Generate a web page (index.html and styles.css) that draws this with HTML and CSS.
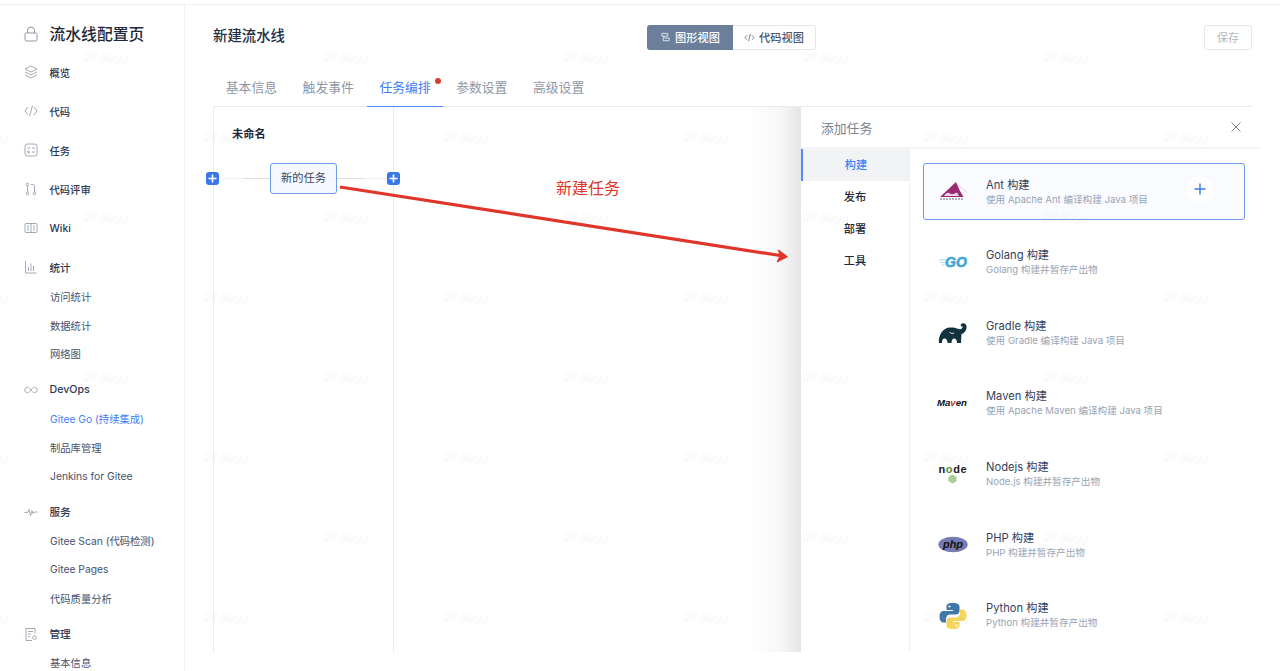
FILE: index.html
```html
<!DOCTYPE html>
<html lang="zh-CN">
<head>
  <meta charset="UTF-8" />
  <meta name="viewport" content="width=device-width, initial-scale=1.0"/>
  <title>新建流水线</title>
  <link rel="stylesheet" href="styles.css">
</head>
<body>

  <div class="top-strip"></div>

  <div class="layout">

    <!-- Sidebar -->
    <div class="sidebar">
      <div class="side-title">
        <svg class="side-icon lock" viewBox="0 0 14 16"><path d="M3.5 7V4.5a3.5 3.5 0 0 1 7 0V7"/><rect x="1" y="7" width="12" height="8" rx="1.5"/></svg>
        <span>流水线配置页</span>
      </div>
      <nav>
        <a class="menu-item">
          <svg class="side-icon" viewBox="0 0 14 14"><path d="M7 1l6 3-6 3-6-3zM1 7l6 3 6-3M1 10l6 3 6-3"/></svg>概览
        </a>
        <a class="menu-item">
          <svg class="side-icon" viewBox="0 0 14 14"><path d="M4 3L1 7l3 4M10 3l3 4-3 4M8.5 1.5l-3 11"/></svg>代码
        </a>
        <a class="menu-item">
          <svg class="side-icon" viewBox="0 0 14 14"><rect x="1" y="1" width="12" height="12" rx="2.5"/><path d="M3.5 5l1 1 1.500-2M8 5h3M8 9h3"/><circle cx="4.600" cy="9" r="1"/></svg>任务
        </a>
        <a class="menu-item">
          <svg class="side-icon" viewBox="0 0 14 14"><circle cx="3.500" cy="2.500" r="1.300"/><circle cx="3.500" cy="11.500" r="1.300"/><circle cx="10.500" cy="11.500" r="1.300"/><path d="M3.500 4v6M10.500 10V4c0-1-.5-1.500-1.500-1.500H7"/></svg>代码评审
        </a>
        <a class="menu-item">
          <svg class="side-icon" viewBox="0 0 14 14"><rect x="1" y="2.500" width="12" height="9" rx="1"/><path d="M7 2.500v9M3 5h2M3 7h2M3 9h2M9 5h2M9 7h2M9 9h2"/></svg>Wiki
        </a>

        <div class="menu-group">
          <div class="group-head">
            <svg class="side-icon" viewBox="0 0 14 14"><path d="M1.500 1v12h11M4.500 11V7M7 11V3.500M9.500 11V6"/></svg>统计
          </div>
          <a class="sub-item">访问统计</a>
          <a class="sub-item">数据统计</a>
          <a class="sub-item">网络图</a>
        </div>

        <div class="menu-group">
          <div class="group-head latin">
            <svg class="side-icon" viewBox="0 0 16 14"><path d="M8 7C6.500 4.800 5.500 4 3.800 4a3 3 0 0 0 0 6C5.500 10 6.500 9.200 8 7c1.500-2.200 2.500-3 4.200-3a3 3 0 0 1 0 6C10.500 10 9.500 9.200 8 7z"/></svg>DevOps
          </div>
          <a class="sub-item active">Gitee Go (持续集成)</a>
          <a class="sub-item">制品库管理</a>
          <a class="sub-item">Jenkins for Gitee</a>
        </div>

        <div class="menu-group">
          <div class="group-head">
            <svg class="side-icon" viewBox="0 0 14 14"><path d="M.5 7.500h3l1.500-3 1.500 6 1.500-5 1 3 1-1.500h3.500"/></svg>服务
          </div>
          <a class="sub-item">Gitee Scan (代码检测)</a>
          <a class="sub-item">Gitee Pages</a>
          <a class="sub-item">代码质量分析</a>
        </div>

        <div class="menu-group">
          <div class="group-head">
            <svg class="side-icon" viewBox="0 0 14 14"><path d="M11 6.500V1.500H2v12h6"/><path d="M4 4.500h5M4 7h3M4 9.500h2"/><circle cx="10.500" cy="10.500" r="1.800"/></svg>管理
          </div>
          <a class="sub-item">基本信息</a>
        </div>
      </nav>
    </div>

    <!-- Main Panel -->
    <div class="main-panel">
      <div class="head-row">
        <h1>新建流水线</h1>
        <div class="view-toggle">
          <a class="view-btn selected">
            <svg class="view-icon" viewBox="0 0 12 12"><path d="M2 1.500h6.500v3H2zM4 4.500v2h6v3H3.500v-3"/></svg>图形视图
          </a>
          <a class="view-btn">
            <svg class="view-icon" viewBox="0 0 12 12"><path d="M3.500 3.500L1 6l2.500 2.500M8.500 3.500L11 6 8.500 8.500M7 2L5 10"/></svg>代码视图
          </a>
        </div>
        <button class="save-btn">保存</button>
      </div>

      <div class="tabs">
        <a class="tab">基本信息</a>
        <a class="tab">触发事件</a>
        <a class="tab active">任务编排<i class="dot"></i></a>
        <a class="tab">参数设置</a>
        <a class="tab">高级设置</a>
      </div>

      <div class="stage">
        <div class="stage-col">
          <div class="col-title">未命名</div>
          <div class="node-row">
            <span class="add-btn left"><svg viewBox="0 0 13 13"><path d="M6.500 2.500v8M2.500 6.500h8"/></svg></span>
            <div class="task-node">新的任务</div>
            <span class="add-btn right"><svg viewBox="0 0 13 13"><path d="M6.500 2.500v8M2.500 6.500h8"/></svg></span>
          </div>
        </div>

        <!-- Add task drawer -->
        <div class="drawer">
          <div class="drawer-head">
            <span>添加任务</span>
            <svg class="close-icon" viewBox="0 0 10 10"><path d="M.5.500l9 9M9.500.500l-9 9"/></svg>
          </div>
          <div class="drawer-body">
            <ul class="cat-list">
              <li class="active">构建</li>
              <li>发布</li>
              <li>部署</li>
              <li>工具</li>
            </ul>
            <div class="task-list">

              <div class="task-card active">
                <svg class="logo" viewBox="0 0 32 32">
                  <path d="M3 21L11 13.500 19 6l4 9 3.500 6z" fill="#9b2a74"/>
                  <path d="M7 20c2-3 4-4 6-2.500s5 0 7-1l2 3.500H9z" fill="#ecd3e3"/>
                  <path d="M20 8l10 8.500" stroke="#dda6c6" stroke-width=".6" fill="none"/>
                  <path d="M3 23h23" stroke="#6c6670" stroke-width="1" stroke-dasharray="2 1" fill="none"/>
                </svg>
                <div class="task-text">
                  <div class="task-name">Ant 构建</div>
                  <div class="task-desc">使用 Apache Ant 编译构建 Java 项目</div>
                </div>
                <span class="card-plus"><svg viewBox="0 0 12 12"><path d="M6 .5v11M.5 6h11"/></svg></span>
              </div>

              <div class="task-card">
                <svg class="logo" viewBox="0 0 32 32">
                  <path d="M2 14h7M3.500 16.500h5M5 19h3" stroke="#a5d8ee" stroke-width="1.200" fill="none"/>
                  <text class="go-text" x="8" y="21">GO</text>
                </svg>
                <div class="task-text">
                  <div class="task-name">Golang 构建</div>
                  <div class="task-desc">Golang 构建并暂存产出物</div>
                </div>
              </div>

              <div class="task-card">
                <svg class="logo" viewBox="0 0 32 32">
                  <g transform="translate(-.5 -1)">
                    <path fill="#12323e" d="M2.500 27C1.500 20 6 12 13 11.500c4-.3 7 .5 9 1.500 2.500 1 4-.5 4.200-2.500-.8.300-2-.2-2-1.300 0-1.200 1.300-2.200 3-2 2.300.3 3.300 2.500 2.800 5-.6 3.300-3 5.300-5 5.800l-.5 9h-4c0-3-1.200-4.500-2.800-4.500S15 24 15 27h-4c0-3-1-4.500-3-4.500S5.500 24 5.500 27z"/>
                    <path d="M13 16c1 1.500 3 2 4.500 1" stroke="#fff" stroke-width=".9" fill="none"/>
                  </g>
                </svg>
                <div class="task-text">
                  <div class="task-name">Gradle 构建</div>
                  <div class="task-desc">使用 Gradle 编译构建 Java 项目</div>
                </div>
              </div>

              <div class="task-card">
                <svg class="logo" viewBox="0 0 32 32">
                  <text class="mvn-text" x="0" y="18">Ma<tspan fill="#c8392b">v</tspan>en</text>
                </svg>
                <div class="task-text">
                  <div class="task-name">Maven 构建</div>
                  <div class="task-desc">使用 Apache Maven 编译构建 Java 项目</div>
                </div>
              </div>

              <div class="task-card">
                <svg class="logo" viewBox="0 0 32 32">
                  <text class="node-text" x="1.500" y="15">n<tspan fill="#4f8f3a">o</tspan>de</text>
                  <path d="M15.500 16.500l4 2.300v4.400l-4 2.300-4-2.300v-4.400z" fill="#a6cf94"/>
                </svg>
                <div class="task-text">
                  <div class="task-name">Nodejs 构建</div>
                  <div class="task-desc">Node.js 构建并暂存产出物</div>
                </div>
              </div>

              <div class="task-card">
                <svg class="logo" viewBox="0 0 32 32">
                  <ellipse cx="16" cy="15.500" rx="14.700" ry="7.700" fill="#777bb3"/>
                  <text class="php-text" x="16" y="19">php</text>
                </svg>
                <div class="task-text">
                  <div class="task-name">PHP 构建</div>
                  <div class="task-desc">PHP 构建并暂存产出物</div>
                </div>
              </div>

              <div class="task-card">
                <svg class="logo" viewBox="0 0 32 32">
                  <path fill="#3f78a8" d="M15.500 3C10 3 9.500 5 9.500 6.500V10H16v1H6.500C4 11 2.500 13 2.500 16.500S4 22.500 6.500 22.500H9v-3.700C9 16 11 14.500 13 14.500h6c2 0 3.500-1.500 3.500-3.500V6.500C22.500 4.500 20.500 3 15.500 3z"/>
                  <path fill="#f7d659" d="M16.500 29c5.500 0 6-2 6-3.500V22H16v-1h9.500c2.500 0 4-2 4-5.500s-1.500-6-4-6H23v3.700c0 2.800-2 4.300-4 4.300h-6c-2 0-3.500 1.500-3.500 3.500v4.500c0 2 2 3.500 7 3.500z"/>
                  <circle cx="12.500" cy="6.500" r="1.100" fill="#fff"/>
                  <circle cx="19.500" cy="25.500" r="1.100" fill="#fff"/>
                </svg>
                <div class="task-text">
                  <div class="task-name">Python 构建</div>
                  <div class="task-desc">Python 构建并暂存产出物</div>
                </div>
              </div>

            </div>
          </div>
        </div>
      </div>
    </div>
  </div>

  <!-- Red annotation drawn on top of the screenshot -->
  <div class="note-text">新建任务</div>
  <svg class="overlay" width="1280" height="671">
    <path d="M340 187L780 255.500" stroke="#e0352b" stroke-width="3.200" fill="none"/>
    <path d="M787.500 256.800L778.500 250 780 256 777 262z" fill="#e0352b" stroke="#e0352b" stroke-width="1" stroke-linejoin="round"/>
  </svg>

  <!-- Watermark -->
  <svg class="overlay" width="1280" height="671">
    <defs>
      <pattern id="mark" x="60" y="40" width="240" height="160" patternUnits="userSpaceOnUse">
        <text class="mark-text" transform="translate(23 19) rotate(8)">git 9999</text>
        <text class="mark-text" transform="translate(143 99) rotate(8)">git 9999</text>
      </pattern>
    </defs>
    <rect width="1280" height="671" fill="url(#mark)"/>
  </svg>

</body>
</html>
```

FILE: styles.css
```css
* {
  box-sizing: border-box;
  margin: 0;
  padding: 0;
}

body {
  position: relative;
  height: 671px;
  overflow: hidden;
  background-color: #fff;
  font-family: Inter, "Noto Sans CJK SC", sans-serif;
  color: #2b3856;
}

.top-strip {
  height: 5px;
  border-bottom: 1px solid #eef1f5;
}

.layout {
  display: flex;
  height: 666px;
}

/* Sidebar */
.sidebar {
  width: 185px;
  flex-shrink: 0;
  border-right: 1px solid #eef0f4;
  overflow: hidden;
}

.side-title {
  display: flex;
  align-items: center;
  height: 39px;
  margin-top: 9px;
  padding-left: 24px;
  font-size: 15.8px;
  font-weight: 500;
  color: #1f2937;
}

.side-icon {
  width: 14px;
  height: 14px;
  margin-right: 11.5px;
  flex-shrink: 0;
  fill: none;
  stroke: #8a94a6;
  stroke-width: 0.8;
}

.lock {
  height: 16px;
  stroke-width: 1;
}

.menu-item {
  display: flex;
  align-items: center;
  height: 38.9px;
  padding-left: 24px;
  font-size: 10.3px;
  font-weight: 500;
}

.menu-group {
  margin-top: 6.7px;
}

.menu-item + .menu-group {
  margin-top: 5.5px;
}

.group-head {
  display: flex;
  align-items: center;
  height: 29px;
  padding-left: 24px;
  font-size: 10.6px;
  font-weight: 500;
}

.sub-item {
  display: flex;
  align-items: center;
  height: 28.8px;
  padding-left: 50px;
  font-size: 10.3px;
  color: #46516b;
}

.sub-item.active {
  color: #3c82f6;
}

/* Main Panel */
.main-panel {
  flex: 1;
  padding: 0 28px;
  min-width: 0;
}

.head-row {
  position: relative;
  display: flex;
  align-items: center;
  justify-content: space-between;
  height: 25px;
  margin-top: 19.5px;
}

.head-row h1 {
  margin-bottom: 5px;
  font-size: 14.4px;
  font-weight: 500;
  color: #233049;
}

.view-toggle {
  position: absolute;
  left: 434px;
  top: 0;
  display: flex;
  height: 25.5px;
}

.view-btn {
  display: flex;
  align-items: center;
  justify-content: center;
  width: 83px;
  font-size: 11.2px;
  font-weight: 500;
  color: #4a5670;
  border: 1px solid #e6e8ec;
  border-left: none;
  border-radius: 0 3px 3px 0;
}

.view-btn.selected {
  width: 86px;
  color: #fff;
  background-color: #6b7f9b;
  border: none;
  border-radius: 3px 0 0 3px;
}

.view-icon {
  width: 11px;
  height: 11px;
  margin-right: 4px;
  fill: none;
  stroke: currentColor;
  stroke-width: 0.8;
}

.save-btn {
  width: 48px;
  height: 25px;
  font-family: inherit;
  font-size: 11.2px;
  color: #b4b9c2;
  background-color: #fff;
  border: 1px solid #e6e8ec;
  border-radius: 3px;
}

.tabs {
  display: flex;
  height: 37.5px;
  margin-top: 20px;
  border-bottom: 1px solid #e9ebef;
}

.tab {
  position: relative;
  display: flex;
  align-items: center;
  justify-content: center;
  width: 76.8px;
  height: 37.5px;
  padding-bottom: 3px;
  font-size: 12.8px;
  color: #8f97a6;
}

.tab.active {
  color: #3c82f6;
  border-bottom: 1px solid #4d8ef7;
}

.dot {
  position: absolute;
  top: 8.5px;
  right: 2.5px;
  width: 6px;
  height: 6px;
  border-radius: 50%;
  background-color: #d5402b;
}

.stage {
  position: relative;
  height: 544.5px;
}

.stage-col {
  width: 181px;
  height: 100%;
  border-left: 1px solid #e9ebef;
  border-right: 1px solid #e9ebef;
}

.col-title {
  padding: 19px 0 0 18px;
  height: 56px;
  font-size: 11.2px;
  font-weight: 700;
  line-height: 16px;
  color: #1f2937;
}

.node-row {
  position: relative;
  display: flex;
  justify-content: center;
}

.node-row::before {
  content: "";
  position: absolute;
  left: 5px;
  right: 5px;
  top: 15px;
  height: 1px;
  background: linear-gradient(to right, #eff0f2 15%, #dcdee2 15% 85%, #eff0f2 85%);
}

.task-node {
  position: relative;
  width: 67px;
  height: 31px;
  line-height: 29px;
  text-align: center;
  font-size: 11.2px;
  color: #3c4658;
  background-color: #f5f8ff;
  border: 1px solid #6f9be6;
  border-radius: 3px;
}

.add-btn {
  position: absolute;
  top: 9px;
  width: 13px;
  height: 13px;
  background-color: #3b78e7;
  border-radius: 3px;
}

.add-btn svg {
  display: block;
  fill: none;
  stroke: #fff;
  stroke-width: 1.6;
}

.add-btn.left {
  left: -8px;
}

.add-btn.right {
  right: -7px;
}

/* Add task drawer */
.drawer {
  position: absolute;
  top: 0;
  bottom: 0;
  right: -7px;
  width: 458px;
  display: flex;
  flex-direction: column;
  background-color: #fff;
}

.drawer::before {
  content: "";
  position: absolute;
  top: 0;
  bottom: 0;
  left: -51px;
  width: 51px;
  background: linear-gradient(to right, rgba(0, 0, 0, 0), rgba(0, 0, 0, 0.03) 60%, rgba(0, 0, 0, 0.1));
}

.drawer-head {
  display: flex;
  align-items: center;
  justify-content: space-between;
  height: 42px;
  flex-shrink: 0;
  padding: 0 18px 0 20px;
  font-size: 12.8px;
  color: #7b8494;
  border-bottom: 2px solid #f2f4f6;
}

.close-icon {
  width: 10px;
  height: 10px;
  fill: none;
  stroke: #7b8494;
  stroke-width: 1;
}

.drawer-body {
  display: flex;
  flex: 1;
  min-height: 0;
}

.cat-list {
  width: 109px;
  flex-shrink: 0;
  list-style: none;
  border-right: 1px solid #f0f1f4;
}

.cat-list li {
  height: 32px;
  line-height: 33px;
  text-align: center;
  font-size: 11.2px;
  font-weight: 500;
  color: #1f2937;
}

.cat-list li.active {
  color: #3c82f6;
  background-color: #f1f3f5;
  border-left: 2px solid #4d8ef7;
}

.task-list {
  flex: 1;
  padding: 14px 14px 0 13px;
  overflow: hidden;
}

.task-card {
  display: flex;
  align-items: center;
  height: 57.4px;
  margin-bottom: 13.3px;
  padding-left: 13px;
  border: 1px solid transparent;
  border-radius: 3px;
}

.task-card.active {
  background-color: #f9fbff;
  border-color: #6f9be6;
}

.task-card.active .task-text {
  padding-top: 2px;
}

.logo {
  width: 32px;
  height: 32px;
  margin-right: 17px;
  flex-shrink: 0;
}

.task-text {
  flex: 1;
}

.task-name {
  font-size: 11.2px;
  line-height: 15px;
  color: #36425e;
}

.task-desc {
  font-size: 9.6px;
  line-height: 14px;
  color: #9aa3b4;
}

.card-plus {
  display: flex;
  align-items: center;
  justify-content: center;
  width: 27px;
  height: 27px;
  margin: 0 31px 5px 0;
  border-radius: 50%;
  background-color: #fff;
}

.card-plus svg {
  width: 12px;
  height: 12px;
  fill: none;
  stroke: #3b78e7;
  stroke-width: 1.4;
}

.go-text {
  font: italic 700 14px "Liberation Sans", sans-serif;
  fill: #3fa7d6;
  stroke: #3fa7d6;
  stroke-width: 0.6;
}

.mvn-text {
  font: italic 700 9.6px "Liberation Sans", sans-serif;
  fill: #111;
}

.node-text {
  font: 700 11px "Liberation Sans", sans-serif;
  letter-spacing: 0.6px;
  fill: #222;
}

.php-text {
  font: italic 700 11px "Liberation Sans", sans-serif;
  fill: #111;
  text-anchor: middle;
}

/* Annotation and watermark */
.overlay {
  position: absolute;
  left: 0;
  top: 0;
  pointer-events: none;
}

.note-text {
  position: absolute;
  left: 556px;
  top: 177px;
  font-size: 16px;
  line-height: 22px;
  color: #e0352b;
}

.mark-text {
  font: italic 11.5px Inter, sans-serif;
  fill: #8a94a6;
  fill-opacity: 0.09;
}
```
